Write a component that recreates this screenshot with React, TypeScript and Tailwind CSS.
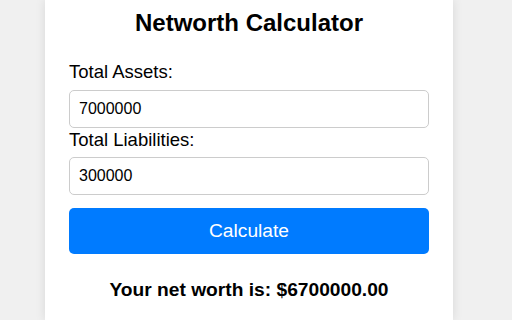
import { useState } from "react";

export default function App() {
  const [assets, setAssets] = useState("7000000");
  const [liabilities, setLiabilities] = useState("300000");
  const [netWorth, setNetWorth] = useState<number | null>(6700000);

  const calculate = () => {
    const a = parseFloat(assets) || 0;
    const l = parseFloat(liabilities) || 0;
    setNetWorth(a - l);
  };

  return (
    <div
      className="flex h-[320px] overflow-hidden bg-[#f0f0f0]"
      style={{ fontFamily: '"Liberation Sans", Arial, sans-serif' }}
    >
      <div className="ml-[45px] flex w-[408px] flex-col bg-white px-6 pt-[9px] shadow-[0_0_10px_rgba(0,0,0,0.1)]">
        <h2 className="text-center text-[24px] font-bold leading-[28px] text-black">
          Networth Calculator
        </h2>

        <label className="mt-6 mb-2 text-[18.5px] leading-[21px] text-black">
          Total Assets:
        </label>
        <input
          type="number"
          value={assets}
          onChange={(e) => setAssets(e.target.value)}
          className="h-[38px] w-full rounded-[5px] border border-[#cccccc] px-[9px] text-[16px] text-black outline-none"
        />

        <label className="mt-[1px] mb-[7px] text-[18.5px] leading-[21px] text-black">
          Total Liabilities:
        </label>
        <input
          type="number"
          value={liabilities}
          onChange={(e) => setLiabilities(e.target.value)}
          className="h-[38px] w-full rounded-[5px] border border-[#cccccc] px-[9px] text-[16px] text-black outline-none"
        />

        <button
          onClick={calculate}
          className="mt-[13px] h-[46px] w-full rounded-[5px] bg-[#007bff] text-[19.2px] text-white"
        >
          Calculate
        </button>

        {netWorth !== null && (
          <h3 className="mt-[25px] text-center text-[19.2px] font-bold leading-[21.5px] text-black">
            Your net worth is: ${netWorth.toFixed(2)}
          </h3>
        )}
      </div>
    </div>
  );
}
